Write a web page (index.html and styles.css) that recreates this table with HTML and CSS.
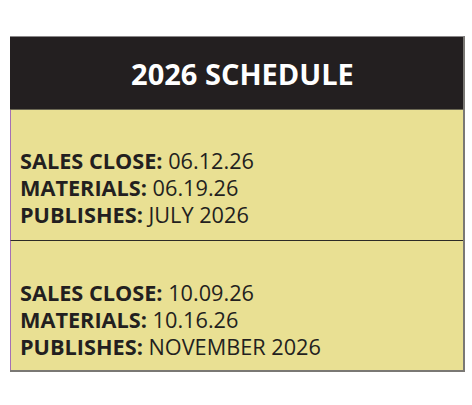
FILE: index.html
```html
<!DOCTYPE html>
<html>
<head>
<meta charset="utf-8">
<link rel="stylesheet" href="styles.css">
</head>
<body>
<div class="schedule">
  <div class="header"><h1 class="title">2026 SCHEDULE</h1></div>
  <div class="section">
    <p class="line"><b>SALES CLOSE:</b> 06.12.26</p>
    <p class="line"><b>MATERIALS:</b> 06.19.26</p>
    <p class="line"><b>PUBLISHES:</b> JULY 2026</p>
  </div>
  <div class="section">
    <p class="line"><b>SALES CLOSE:</b> 10.09.26</p>
    <p class="line"><b>MATERIALS:</b> 10.16.26</p>
    <p class="line"><b>PUBLISHES:</b> NOVEMBER 2026</p>
  </div>
</div>
</body>
</html>
```
FILE: styles.css
```css
html, body {
  margin: 0;
  padding: 0;
  background: #ffffff;
}
body {
  font-family: "Open Sans", "Liberation Sans", sans-serif;
  color: #231f20;
  padding: 36px 0 0 10px;
}
.schedule {
  width: 453px;
  background: #e9e093;
  border-top: 1px solid #8a8788;
  border-right: 2px solid #7a7874;
  border-bottom: 2px solid #7a7874;
}
.header {
  background: #231f20;
  height: 73px;
  box-sizing: border-box;
  padding-left: 12px;
  display: flex;
  align-items: center;
  justify-content: center;
  border-bottom: 1px solid #6b6854;
}
.title {
  margin: 0;
  color: #ffffff;
  font-weight: 700;
  font-size: 29px;
  letter-spacing: 0;
}
.section {
  height: 130px;
  box-sizing: border-box;
  padding: 38px 0 0 9px;
  border-left: 1px solid #a56fb5;
}
.section + .section {
  border-top: 1px solid #2d2b26;
  padding-top: 39px;
}
.line {
  margin: 0;
  font-size: 21.7px;
  line-height: 26.8px;
}
.line b {
  font-weight: 700;
}
```
